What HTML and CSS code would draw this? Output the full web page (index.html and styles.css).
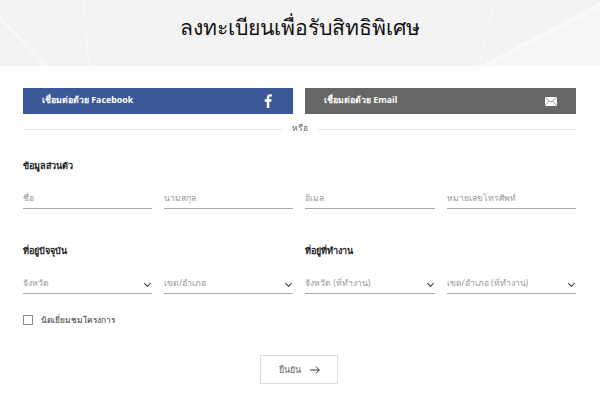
FILE: index.html
```html
<!DOCTYPE html>
<html lang="th">
<head>
    <meta charset="UTF-8">
    <title>ลงทะเบียนเพื่อรับสิทธิพิเศษ</title>
    <link rel="stylesheet" href="styles.css">
</head>
<body>

<div class="banner">
    <svg class="streaks" width="600" height="66" viewBox="0 0 600 66">
        <path d="M0 16 L48 66 L45 66 L0 20Z" fill="#f8f8f8"/>
        <path d="M83 0 L84 0 L90 66 L88 66Z" fill="#f7f7f7"/>
        <path d="M490 66 L600 8 L600 66Z" fill="#f6f6f6"/>
        <path d="M480 66 L600 2 L600 8 L490 66Z" fill="#f9f9f9"/>
        <path d="M493 0 L495 0 L480 66 L478 66Z" fill="#f6f6f6"/>
    </svg>
    <h1>ลงทะเบียนเพื่อรับสิทธิพิเศษ</h1>
</div>

<div class="form-wrap">
    <div class="social-row">
        <a class="social facebook" href="#">
            <span>เชื่อมต่อด้วย Facebook</span>
            <svg class="fb-icon" width="8" height="14" viewBox="0 0 8 14"><path d="M5.300 14V7.700h2l.4-2.400H5.300V3.800c0-.7.2-1.200 1.200-1.200H8V.4C7.700.3 6.900.2 6 .2 4.100.2 2.800 1.400 2.800 3.500v1.800H.7v2.400h2.100V14z" fill="#fff"/></svg>
        </a>
        <a class="social email" href="#">
            <span>เชื่อมต่อด้วย Email</span>
            <svg class="mail-icon" width="12" height="9" viewBox="0 0 12 9"><rect width="12" height="9" rx="1" fill="#fff"/><path d="M.5 .8 6 5l5.500-4.200M.5 8.300 4.500 4M11.500 8.300 7.500 4" fill="none" stroke="#777" stroke-width=".7"/></svg>
        </a>
    </div>

    <div class="or-line"><span>หรือ</span></div>

    <h2 class="section-title first">ข้อมูลส่วนตัว</h2>
    <div class="field-grid">
        <div class="field">ชื่อ</div>
        <div class="field">นามสกุล</div>
        <div class="field">อีเมล</div>
        <div class="field">หมายเลขโทรศัพท์</div>
    </div>

    <div class="address-titles">
        <h2 class="section-title">ที่อยู่ปัจจุบัน</h2>
        <h2 class="section-title">ที่อยู่ที่ทำงาน</h2>
    </div>
    <div class="field-grid">
        <div class="field select">จังหวัด</div>
        <div class="field select">เขต/อำเภอ</div>
        <div class="field select">จังหวัด (ที่ทำงาน)</div>
        <div class="field select">เขต/อำเภอ (ที่ทำงาน)</div>
    </div>

    <label class="visit">
        <span class="box"></span>
        <span>นัดเยี่ยมชมโครงการ</span>
    </label>

    <div class="submit-row">
        <a class="submit" href="#">
            <span>ยืนยัน</span>
            <svg width="10" height="8" viewBox="0 0 10 8"><path d="M0 4h9.300M6 .7 9.300 4 6 7.300" fill="none" stroke="#333" stroke-width="1"/></svg>
        </a>
    </div>
</div>

</body>
</html>
```

FILE: styles.css
```css
* {
    margin: 0;
    padding: 0;
    box-sizing: border-box;
    font-family: 'Noto Sans', 'DejaVu Sans', sans-serif;
}

body {
    background: #fff;
    width: 600px;
    height: 400px;
    overflow: hidden;
}

.banner {
    height: 66px;
    display: flex;
    justify-content: center;
    padding-top: 12px;
    background: #f3f3f3;
    position: relative;
}

.streaks {
    position: absolute;
    left: 0;
    top: 0;
}

.banner h1 {
    font-size: 21.2px;
    line-height: 30px;
    font-weight: 500;
    color: #111;
    position: relative;
    margin-left: -1px;
}

.form-wrap {
    padding: 22px 24px 0 23px;
}

.social-row {
    display: grid;
    grid-template-columns: 270px 271px;
    gap: 12px;
}

.social {
    height: 26px;
    display: flex;
    align-items: center;
    justify-content: space-between;
    color: #fff;
    font-size: 8.8px;
    font-weight: 700;
    text-decoration: none;
}

.social span {
    margin-top: -2px;
}

.facebook {
    background: #3b5998;
    padding: 0 21px 0 19px;
}

.email {
    background: #666;
    padding: 0 19px;
}

.or-line {
    display: flex;
    align-items: center;
    gap: 10px;
    height: 20px;
    margin-top: 5px;
    font-size: 8.5px;
    color: #666;
}

.or-line span {
    margin-top: -2px;
}

.or-line::before,
.or-line::after {
    content: "";
    flex: 1;
    height: 1px;
    background: #e8e8e8;
}

.section-title {
    font-size: 9px;
    line-height: 14px;
    font-weight: 700;
    color: #222;
}

.section-title.first {
    margin-top: 20px;
}

.field-grid {
    display: grid;
    grid-template-columns: 129px 129px 129.500px 129.500px;
    gap: 12px;
    margin-top: 14px;
}

.field {
    height: 22px;
    line-height: 16px;
    padding-top: 3px;
    border-bottom: 1px solid #aaa;
    font-size: 8.6px;
    color: #999;
    position: relative;
}

.select::after {
    content: "";
    position: absolute;
    right: 2px;
    top: 9px;
    width: 4px;
    height: 4px;
    border-right: 1px solid #333;
    border-bottom: 1px solid #333;
    transform: rotate(45deg);
}

.address-titles {
    display: grid;
    grid-template-columns: 270px 271px;
    gap: 12px;
    margin-top: 35px;
}

.visit {
    display: flex;
    align-items: center;
    gap: 8px;
    height: 12px;
    margin-top: 20px;
    font-size: 8.4px;
    font-weight: 500;
    color: #333;
}

.box {
    width: 10px;
    height: 10px;
    border: 1px solid #888;
    background: #fff;
}

.submit-row {
    display: flex;
    justify-content: center;
    margin-top: 29px;
    padding-right: 1px;
}

.submit {
    width: 78px;
    height: 29px;
    border: 1px solid #ddd;
    display: flex;
    align-items: center;
    justify-content: center;
    gap: 9px;
    font-size: 9px;
    color: #666;
    text-decoration: none;
}
```
